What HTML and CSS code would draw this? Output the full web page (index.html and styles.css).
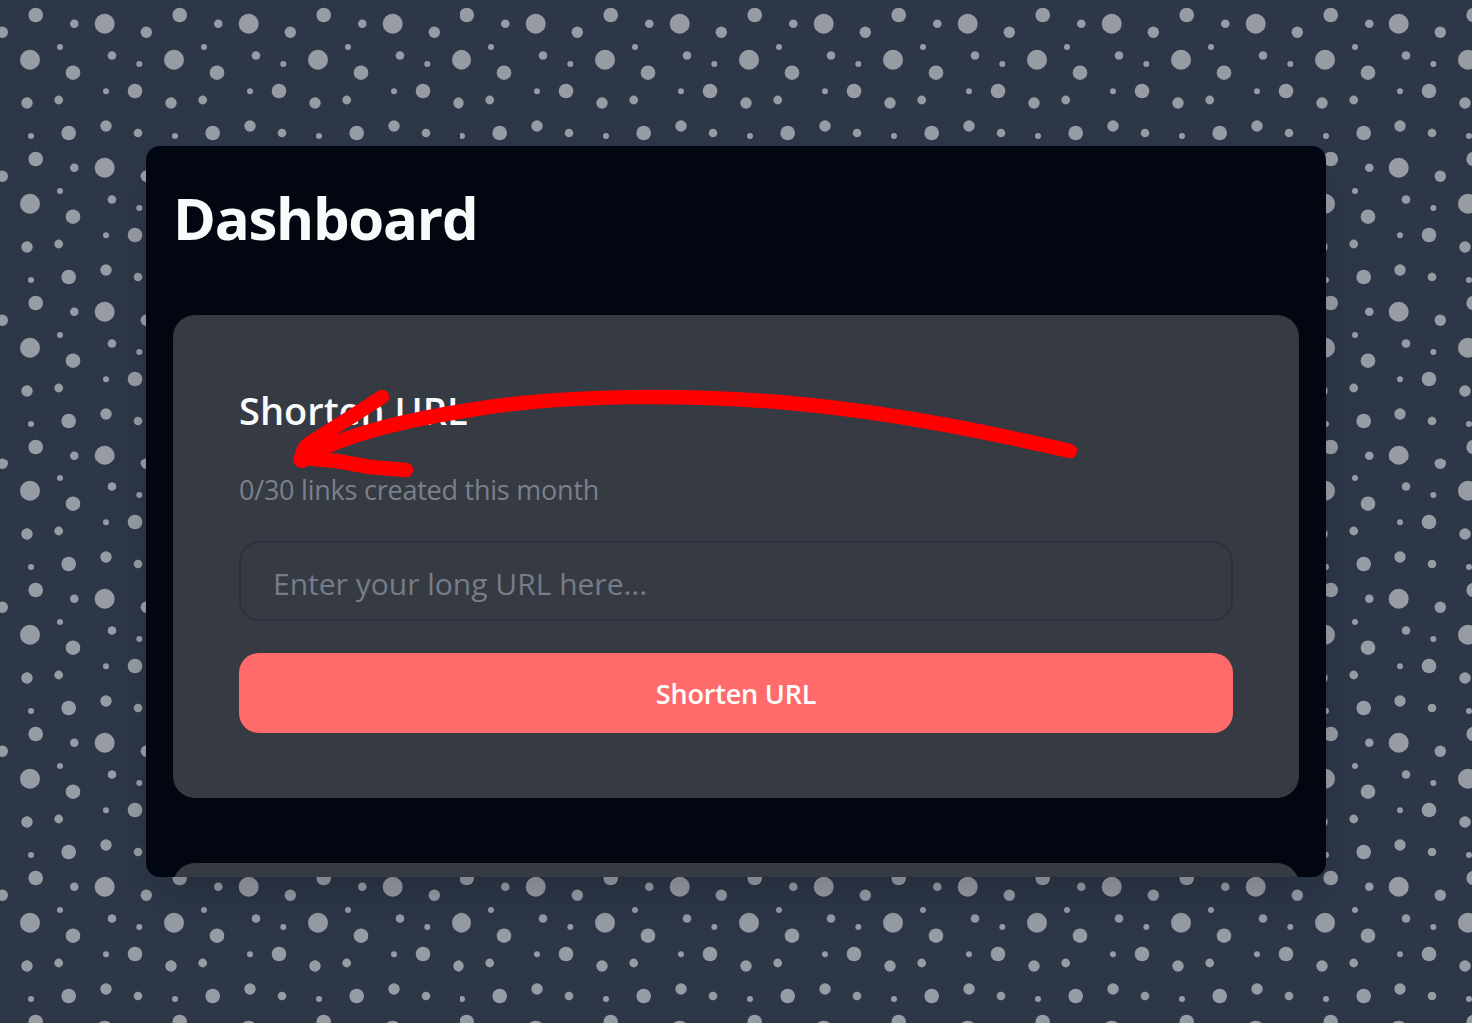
FILE: index.html
```html
<!DOCTYPE html>
<html lang="en">
<head>
<meta charset="utf-8">
<title>Dashboard</title>
<link rel="stylesheet" href="styles.css">
</head>
<body>
<main class="panel">
  <h1 class="page-title">Dashboard</h1>
  <section class="card">
    <h2 class="card-title">Shorten URL</h2>
    <p class="usage">0/30 links created this month</p>
    <form class="shorten-form">
      <input class="url-input" type="text" placeholder="Enter your long URL here...">
      <button class="submit" type="button">Shorten URL</button>
    </form>
  </section>
  <section class="card card-next"></section>
</main>
<svg class="annotation" width="1472" height="1023" viewBox="0 0 1472 1023" aria-hidden="true">
  <path d="M1070 451C1000 435 900 413 790 403C700 395 570 393 470 410C400 421 345 435 302 458" />
  <path d="M382 397L340 424L310 443C304 447 302 452 302 458L337 461L370 467L406 470" />
  <circle cx="302" cy="459" r="9" />
</svg>
</body>
</html>
```
FILE: styles.css
```css
* { box-sizing: border-box; }

html, body { height: 100%; margin: 0; }

body {
  padding: 146px;
  overflow: hidden;
  font-family: "Open Sans", "Noto Sans", sans-serif;
  background-color: #2d3748;
  background-image: url("data:image/svg+xml,%3Csvg xmlns='http://www.w3.org/2000/svg' width='144' height='144' viewBox='0 0 144 144'%3E%3Cg fill='%23fff' fill-opacity='.5'%3E%3Ccircle cx='35.7' cy='15' r='7.3'/%3E%3Ccircle cx='74.3' cy='23.7' r='4.3'/%3E%3Ccircle cx='104.7' cy='23.7' r='10'/%3E%3Ccircle cx='2.3' cy='32.3' r='5.7'/%3E%3Ccircle cx='146.3' cy='32.3' r='5.7'/%3E%3Ccircle cx='30' cy='59.7' r='10'/%3E%3Ccircle cx='60' cy='47' r='3'/%3E%3Ccircle cx='112' cy='55.5' r='4.3'/%3E%3Ccircle cx='139.3' cy='64' r='3'/%3E%3Ccircle cx='73' cy='72.7' r='7.3'/%3E%3Ccircle cx='106' cy='91.3' r='3'/%3E%3Ccircle cx='135' cy='91' r='7.3'/%3E%3Ccircle cx='27' cy='103' r='5.7'/%3E%3Ccircle cx='58.7' cy='100' r='4.4'/%3E%3Ccircle cx='106' cy='126' r='5.7'/%3E%3Ccircle cx='138' cy='133' r='4.3'/%3E%3Ccircle cx='31' cy='136' r='3'/%3E%3Ccircle cx='68.7' cy='133' r='7.3'/%3E%3C/g%3E%3C/svg%3E");
  background-size: 143.85px 143.85px;
}

.panel {
  height: 731px;
  padding: 27px;
  overflow: hidden;
  background: #020610;
  border-radius: 14px;
  box-shadow: 0 25px 50px -12px rgba(0, 0, 0, .2);
}

.page-title {
  margin: 0 0 59px;
  height: 83px;
  font-size: 58px;
  line-height: 89px;
  font-weight: 700;
  letter-spacing: -1.25px;
  color: #f9fafb;
}

.card {
  height: 483px;
  padding: 66px;
  margin-bottom: 65px;
  background: #363a43;
  border-radius: 22px;
}

.card-title {
  margin: 0;
  font-size: 38px;
  line-height: 59px;
  font-weight: 600;
  letter-spacing: 0;
  color: #f9fafb;
}

.usage {
  margin: 34px 0 35px;
  font-size: 27px;
  line-height: 32px;
  letter-spacing: -.23px;
  color: #7a808c;
}

.shorten-form {
  display: flex;
  flex-direction: column;
  gap: 32px;
}

.url-input {
  display: block;
  width: 100%;
  height: 80px;
  padding: 4px 33px 0 32px;
  font: inherit;
  font-size: 30px;
  color: #f9fafb;
  background: transparent;
  border: 2px solid #2a3242;
  border-radius: 20px;
  outline: none;
}

.url-input::placeholder {
  color: #767c88;
  opacity: 1;
}

.submit {
  display: block;
  width: 100%;
  height: 80px;
  padding: 0;
  font: inherit;
  font-size: 27px;
  font-weight: 600;
  letter-spacing: -.2px;
  color: #fff;
  background: #ff6b6b;
  border: 0;
  border-radius: 20px;
}

.card-next { height: 200px; margin-bottom: 0; }

.annotation {
  position: absolute;
  top: 0;
  left: 0;
  pointer-events: none;
}

.annotation path {
  fill: none;
  stroke: #f00;
  stroke-width: 14.5;
  stroke-linecap: round;
  stroke-linejoin: round;
}

.annotation circle { fill: #f00; }
```
